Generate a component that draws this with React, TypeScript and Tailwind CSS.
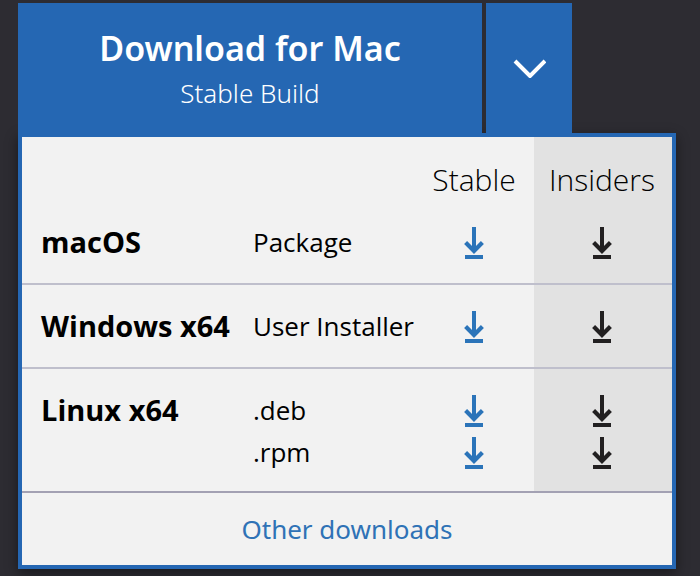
type Build = { label: string };
type Platform = { name: string; builds: Build[] };

const platforms: Platform[] = [
  { name: "macOS", builds: [{ label: "Package" }] },
  { name: "Windows x64", builds: [{ label: "User Installer" }] },
  { name: "Linux x64", builds: [{ label: ".deb" }, { label: ".rpm" }] },
];

function DownloadIcon() {
  return (
    <svg width="20" height="32" viewBox="0 0 20 32" fill="none" stroke="currentColor" aria-hidden="true">
      <path d="M10 0v24" strokeWidth="4" />
      <path d="M1.6 15.6L10 24l8.4-8.4" strokeWidth="4.2" />
      <path d="M1 30h18" strokeWidth="4" />
    </svg>
  );
}

function DownloadLink({ label, className }: { label: string; className: string }) {
  return (
    <a href="#" aria-label={label} className={`flex h-[42px] items-center justify-center pt-[2px] ${className}`}>
      <DownloadIcon />
    </a>
  );
}

function PlatformRows({ platform, first, last }: { platform: Platform; first: boolean; last: boolean }) {
  const end = last ? "border-b-2 border-[#a3a1b3] pb-[18px]" : "border-b-2 border-[#bfbfcc] pb-5";
  return (
    <tbody>
      {platform.builds.map((build, i) => {
        const top = i === 0 && !first ? "pt-5" : "pt-0";
        const bottom = i === platform.builds.length - 1 ? end : "pb-0";
        return (
          <tr key={build.label}>
            {i === 0 && (
              <th
                scope="rowgroup"
                rowSpan={platform.builds.length}
                className={`pl-[19px] text-left align-top text-[29px] leading-[42px] font-bold ${top} ${end}`}
              >
                {platform.name}
              </th>
            )}
            <td className={`pl-[19px] text-[26px] leading-[42px] ${top} ${bottom}`}>{build.label}</td>
            <td className={`${top} ${bottom}`}>
              <DownloadLink label={`${platform.name} ${build.label} Stable`} className="text-[#2b74b9]" />
            </td>
            <td className={`bg-[#e2e2e2] pr-[2px] ${top} ${bottom}`}>
              <DownloadLink label={`${platform.name} ${build.label} Insiders`} className="text-[#222021]" />
            </td>
          </tr>
        );
      })}
    </tbody>
  );
}

export default function App() {
  return (
    <main className="min-h-screen bg-[#2d2c32] pt-[3px] pr-6 pb-[7px] pl-[18px] font-['Open_Sans','Noto_Sans',sans-serif] whitespace-nowrap text-black">
      <div className="flex h-[130px] gap-1 text-white">
        <button type="button" className="flex w-[464px] flex-col items-center bg-[#2567b3] pt-5 font-['Noto_Sans','Open_Sans',sans-serif]">
          <span className="text-[34px] leading-[50px] font-semibold">Download for Mac</span>
          <span className="text-[26px] leading-[40px] font-light">Stable Build</span>
        </button>
        <button
          type="button"
          aria-label="Show all builds"
          aria-expanded="true"
          className="flex w-[86px] items-center justify-center bg-[#2567b3]"
        >
          <svg width="34" height="20" viewBox="0 0 34 20" fill="none" stroke="currentColor" aria-hidden="true">
            <path d="M3 3l15 15L33 3" strokeWidth="4" />
          </svg>
        </button>
      </div>
      <section className="border-4 border-[#2567b3] bg-[#f2f2f2] shadow-[0_4px_12px_rgba(0,0,0,0.45)]">
        <table className="w-full table-fixed border-separate border-spacing-0">
          <colgroup>
            <col className="w-[212px]" />
            <col />
            <col className="w-[120px]" />
            <col className="w-[138px]" />
          </colgroup>
          <thead>
            <tr className="h-[84px] text-[30px]">
              <td colSpan={2} />
              <th scope="col" className="p-0 font-light">Stable</th>
              <th scope="col" className="bg-[#e2e2e2] p-0 pr-[2px] font-light">Insiders</th>
            </tr>
          </thead>
          {platforms.map((platform, i) => (
            <PlatformRows
              key={platform.name}
              platform={platform}
              first={i === 0}
              last={i === platforms.length - 1}
            />
          ))}
        </table>
        <a href="#" className="block text-center font-['Noto_Sans','Open_Sans',sans-serif] text-[26px] leading-[72px] text-[#2f72b6]">
          Other downloads
        </a>
      </section>
    </main>
  );
}
